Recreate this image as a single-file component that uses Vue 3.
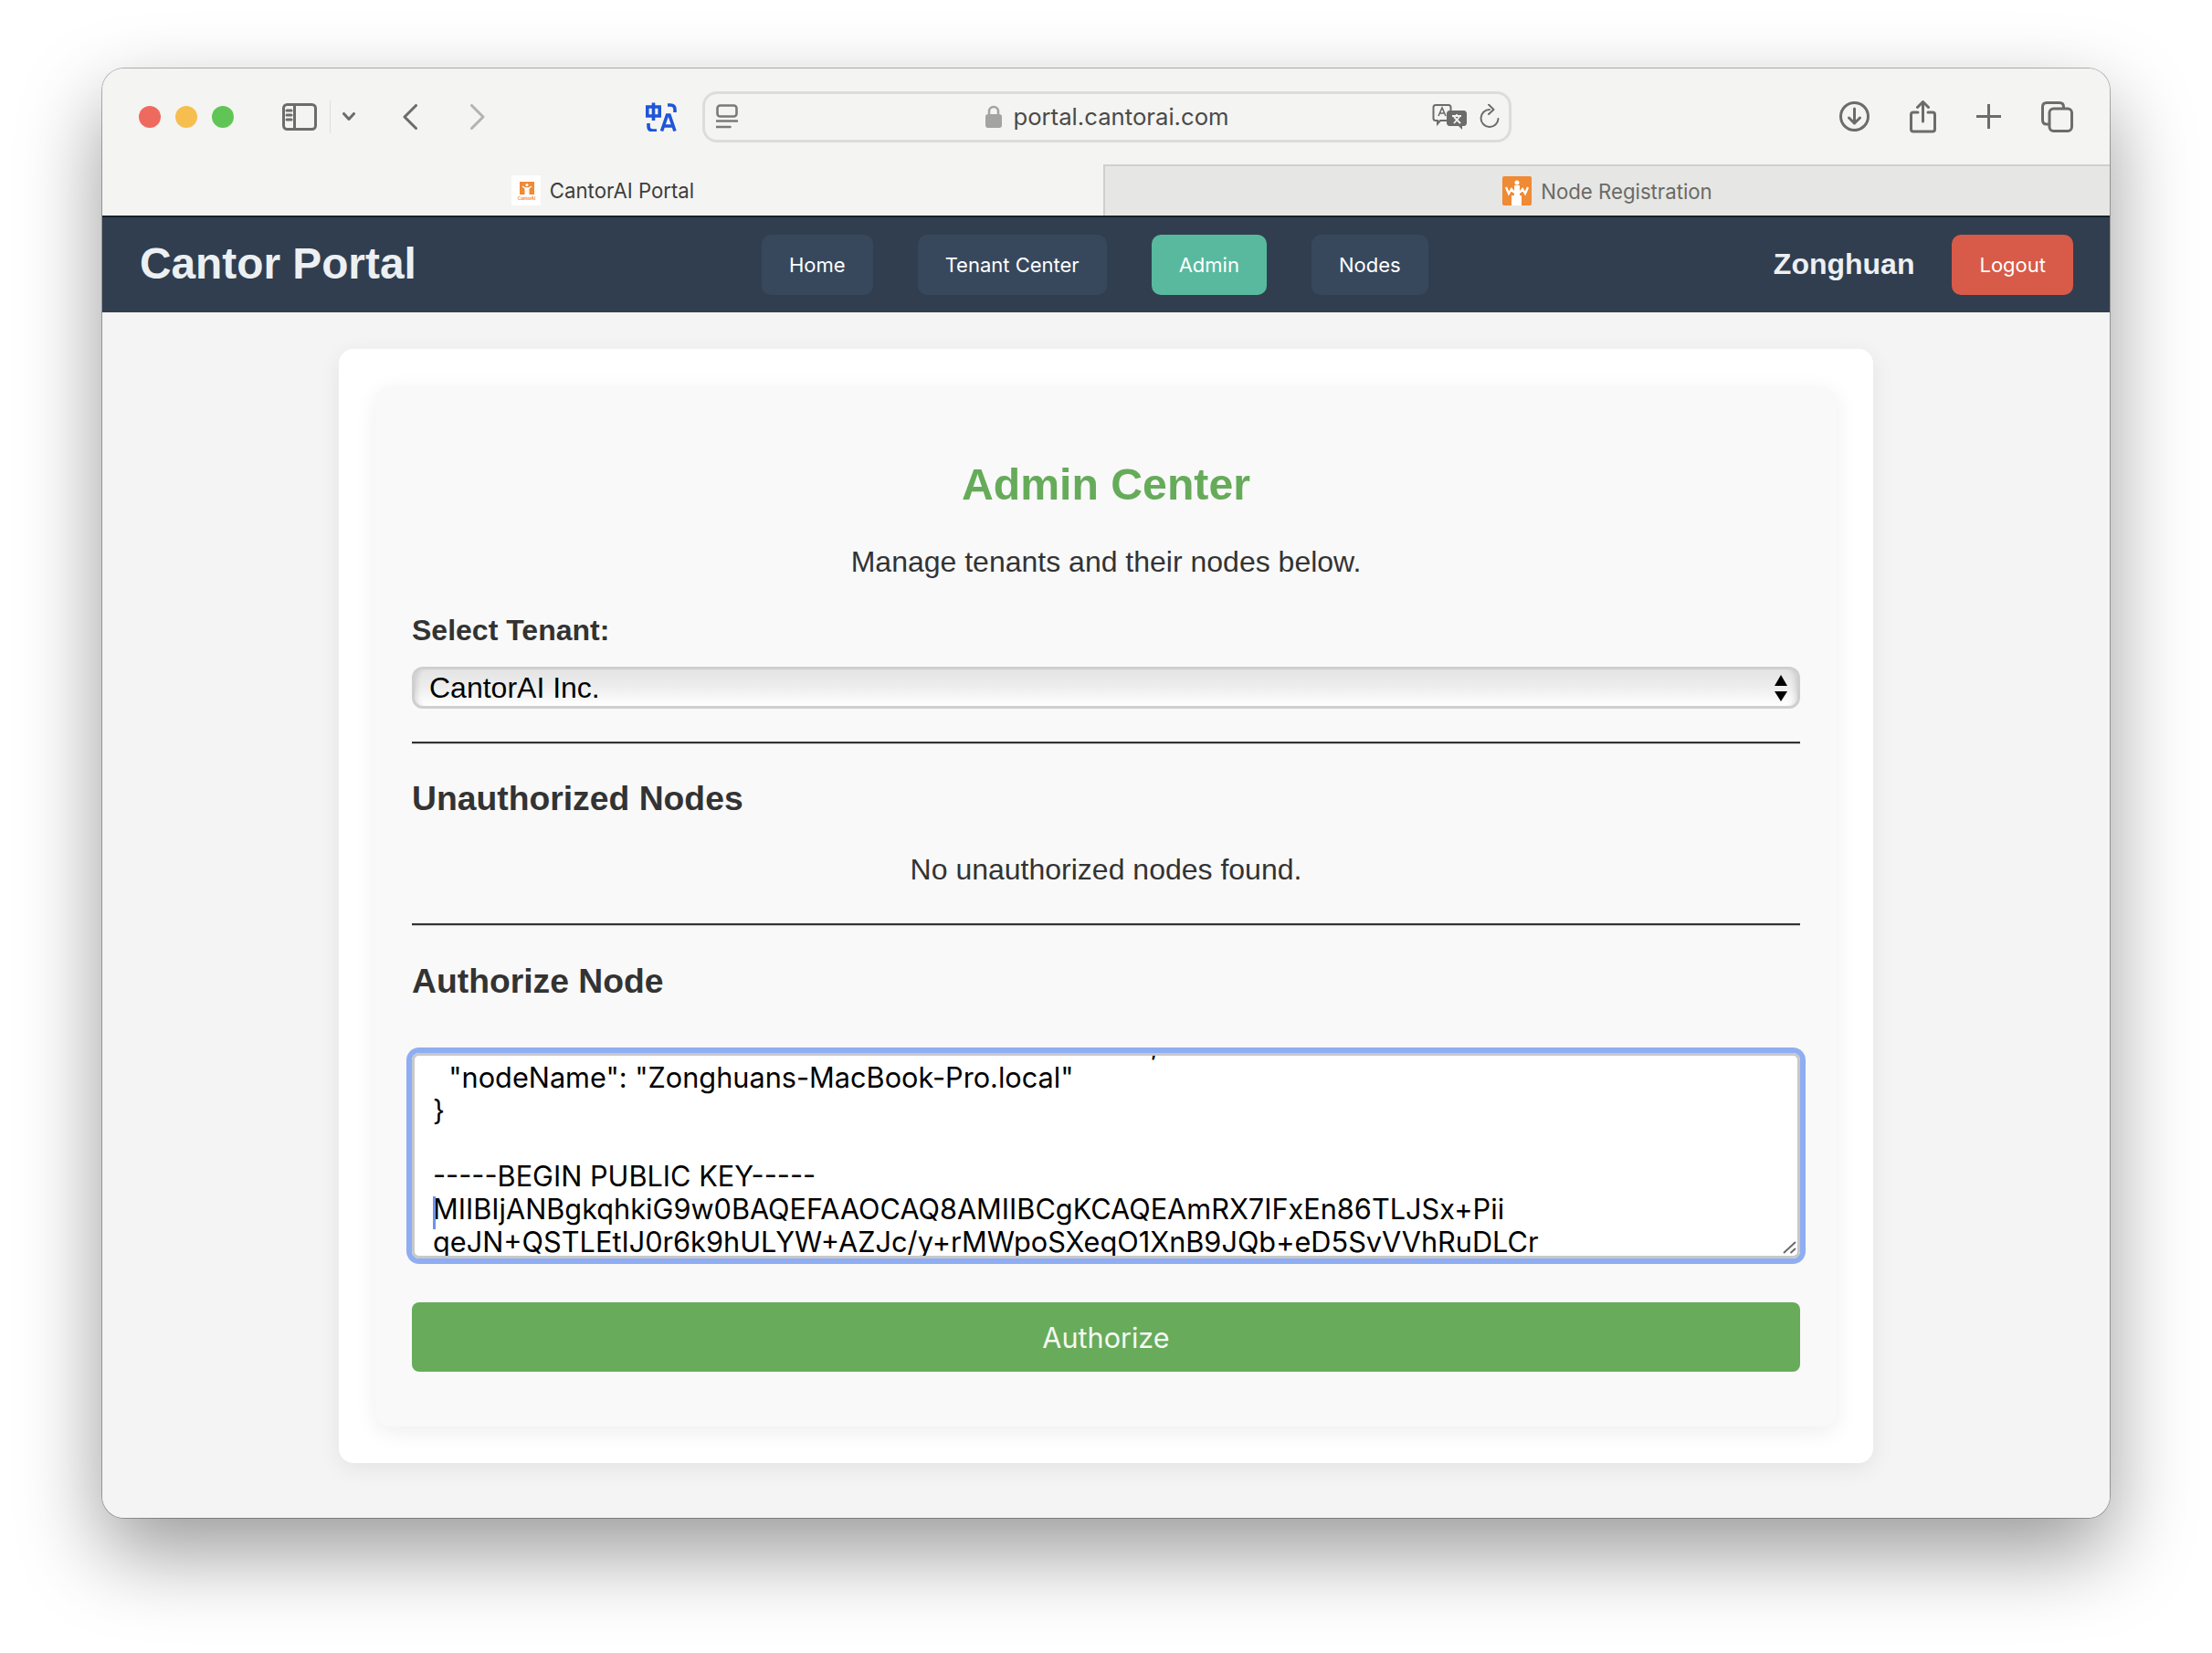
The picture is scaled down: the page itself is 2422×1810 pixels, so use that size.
<template>
  <div class="desk">
    <div class="window">
      <div class="toolbar">
        <div class="lights">
          <span class="light red"></span>
          <span class="light yellow"></span>
          <span class="light green"></span>
        </div>
        <svg class="ico sidebar-ico" width="38" height="30" viewBox="0 0 38 30">
          <rect x="1.5" y="1.5" width="35" height="27" rx="4" />
          <path d="M13.5 1.5v27M5 8h5M5 13h5M5 18h5" />
        </svg>
        <span class="divider"></span>
        <svg class="ico chevron" width="14" height="9" viewBox="0 0 14 9"><path d="M1.5 1.5l5.5 6 5.500-6" /></svg>
        <svg class="ico back" width="16" height="28" viewBox="0 0 16 28"><path d="M14.500 1.500L2 14l12.500 12.500" /></svg>
        <svg class="ico forward" width="16" height="28" viewBox="0 0 16 28"><path d="M1.500 1.500L14 14 1.500 26.500" /></svg>
        <svg class="translate" width="34" height="32" viewBox="0 0 34 32">
          <path d="M1.800 5h13.400v10H1.800zM8.500 0.500v19.500M24 3h3q5 0 5 5v3M3 23v3q0 5 5 5h4M17.500 31.500L23.500 14h2.500l6 17.500M19.800 26h10.500" />
        </svg>
        <div class="urlbar">
          <svg class="ico reader" width="24" height="27" viewBox="0 0 24 27">
            <rect x="1.500" y="1.500" width="21" height="12" rx="3" />
            <path d="M0.500 18.500h23M0.500 25h15" />
          </svg>
          <div class="address">
            <svg width="18" height="25" viewBox="0 0 18 25">
              <path class="shackle" d="M4 11V7a5 5 0 0 1 10 0v4" />
              <rect x="0" y="10" width="18" height="15" rx="3" fill="#a3a3a1" />
            </svg>
            <span class="url">portal.cantorai.com</span>
          </div>
          <svg class="page-translate" width="38" height="28" viewBox="0 0 38 28">
            <path class="bubble-a" d="M4 1h14c1.500 0 2.500 1 2.500 2.500v12c0 1.500-1 2.500-2.500 2.500H9l-3 3.500V18H4c-1.500 0-2.500-1-2.500-2.500v-12C1.500 2 2.500 1 4 1z" />
            <path class="glyph-a" d="M7 13l4-9 4 9M8.500 10h5" />
            <path class="bubble-x" d="M19 7h16c1.500 0 3 1.500 3 3v11c0 1.500-1.500 3-3 3h-2v4l-4-4H19c-1.500 0-3-1.500-3-3V10c0-1.500 1.500-3 3-3z" />
            <path class="glyph-x" d="M22 13h10M27 11v2M24 21l6-7M24 14l7 7" />
          </svg>
          <svg class="ico reload" width="22" height="27" viewBox="0 0 22 27">
            <path d="M11 6a9.500 9.500 0 1 0 9.500 10M10 0.500l5.500 5.500-5.500 5" />
          </svg>
        </div>
        <div class="actions">
          <svg class="ico" width="33" height="33" viewBox="0 0 33 33">
            <circle cx="16.500" cy="16.500" r="15" />
            <path d="M16.500 8v16M10.500 18l6 6 6-6" />
          </svg>
          <svg class="ico" width="29" height="36" viewBox="0 0 29 36">
            <path d="M9 13H4c-1.500 0-2.500 1-2.500 2.500v16c0 1.500 1 2.500 2.500 2.500h21c1.500 0 2.500-1 2.500-2.500v-16c0-1.500-1-2.500-2.500-2.500h-5M14.500 23V2M8.500 7.500l6-6 6 6" />
          </svg>
          <svg class="ico" width="27" height="27" viewBox="0 0 27 27"><path d="M13.500 0v27M0 13.500h27" /></svg>
          <svg class="ico" width="35" height="34" viewBox="0 0 35 34">
            <path d="M7 25H6c-3 0-4.500-1.500-4.500-4.500V6c0-3 1.500-4.500 4.500-4.500h14c3 0 4.500 1.500 4.500 4.500v1" />
            <rect x="9" y="8" width="24.500" height="24.500" rx="4.500" />
          </svg>
        </div>
      </div>

      <div class="tabs">
        <div class="tab active">
          <svg width="32" height="33" viewBox="0 0 32 33">
            <rect width="32" height="33" fill="#fff" />
            <rect x="9" y="7" width="16" height="14" fill="#ef8a35" />
            <rect x="14.500" y="14" width="5" height="7" fill="#fff" />
            <circle cx="17" cy="10.500" r="1.500" fill="#fff" />
            <path d="M12 12l3 2h4l3-2" stroke="#fff" stroke-width="1.500" fill="none" />
            <text x="16.500" y="27" class="fav-text">CantorAI</text>
          </svg>
          <span>CantorAI Portal</span>
        </div>
        <div class="tab inactive">
          <svg width="32" height="32" viewBox="0 0 32 32">
            <rect width="32" height="32" rx="2" fill="#ef8a35" />
            <rect x="10" y="21" width="11" height="11" fill="#fff" />
            <rect x="13" y="10" width="6" height="11" fill="#fff" />
            <circle cx="16" cy="7" r="2.500" fill="#fff" />
            <path d="M4 12l3 7 3-5 3 4M19 18l3-4 3 5 3-7" stroke="#fff" stroke-width="2.300" fill="none" />
          </svg>
          <span>Node Registration</span>
        </div>
      </div>

      <nav class="navbar">
        <div class="brand">Cantor Portal</div>
        <div class="nav-links">
          <button v-for="link in links" :key="link" class="nav-btn" :class="{ current: link === 'Admin' }">{{ link }}</button>
        </div>
        <div class="user">
          <span class="username">Zonghuan</span>
          <button class="logout">Logout</button>
        </div>
      </nav>

      <main class="content">
        <div class="outer-card">
          <div class="panel">
            <h1>Admin Center</h1>
            <p class="center-text intro">Manage tenants and their nodes below.</p>
            <label class="field-label">Select Tenant:</label>
            <div class="select">
              <span>CantorAI Inc.</span>
              <svg width="14" height="29" viewBox="0 0 14 29">
                <path d="M7 0l7 12H0zM0 18h14L7 29z" />
              </svg>
            </div>
            <hr class="rule-first" />
            <h2>Unauthorized Nodes</h2>
            <p class="center-text empty">No unauthorized nodes found.</p>
            <hr class="rule-second" />
            <h2>Authorize Node</h2>
            <div class="key-wrap">
              <textarea ref="keyBox" class="key-box" spellcheck="false" readonly :value="keyText"></textarea>
              <span class="caret"></span>
              <svg class="grip" width="15" height="14" viewBox="0 0 15 14">
                <path d="M1 13L14 1M8.500 13L14 8" />
              </svg>
            </div>
            <button class="authorize">Authorize</button>
          </div>
        </div>
      </main>
    </div>
  </div>
</template>

<script setup>
import { onMounted, ref } from 'vue'

const links = ['Home', 'Tenant Center', 'Admin', 'Nodes']

const keyBox = ref(null)

// the first visible row only shows the tail of a comma from the line above
const keyText = [
  ' '.repeat(91) + ',',
  '  "nodeName": "Zonghuans-MacBook-Pro.local"',
  '}',
  '',
  '-----BEGIN PUBLIC KEY-----',
  'MIIBIjANBgkqhkiG9w0BAQEFAAOCAQ8AMIIBCgKCAQEAmRX7IFxEn86TLJSx+Pii',
  'qeJN+QSTLEtIJ0r6k9hULYW+AZJc/y+rMWpoSXeqO1XnB9JQb+eD5SvVVhRuDLCr',
  '',
  ''
].join('\n')

onMounted(() => {
  keyBox.value.scrollTop = 30
})
</script>

<style>
html,
body {
  margin: 0;
  background: #fff;
}
</style>

<style scoped>
.desk {
  width: 2422px;
  height: 1810px;
  box-sizing: border-box;
  padding: 75px 112px 0;
  overflow: hidden;
  font-family: "Liberation Sans", Arial, sans-serif;
}

.window {
  width: 2198px;
  height: 1587px;
  border-radius: 24px;
  overflow: hidden;
  display: flex;
  flex-direction: column;
  box-shadow: 0 0 0 1px rgba(0, 0, 0, 0.28), 0 38px 90px rgba(0, 0, 0, 0.4);
  background: #f4f4f4;
}

.toolbar {
  height: 105px;
  flex: none;
  box-sizing: border-box;
  background: #f4f4f2;
  display: flex;
  align-items: center;
  padding: 0 39px 0 40px;
}

.lights {
  display: flex;
  gap: 16px;
  margin-right: 53px;
}

.light {
  width: 24px;
  height: 24px;
  border-radius: 50%;
}

.red { background: #ef6a5e; }
.yellow { background: #f6be4f; }
.green { background: #60c554; }

.ico {
  flex: none;
  fill: none;
  stroke: #6c6c6a;
  stroke-width: 3;
  stroke-linecap: round;
  stroke-linejoin: round;
}

.sidebar-ico { margin-right: 14px; }

.divider {
  width: 1px;
  height: 36px;
  background: #dfdfdd;
  margin-right: 13px;
}

.chevron { margin-right: 52px; }
.back { margin-right: 58px; }
.forward { stroke: #b3b3b1; margin-right: 176px; }

.translate {
  flex: none;
  fill: none;
  stroke: #1f55d8;
  stroke-width: 3.600;
  margin-right: 28px;
}

.urlbar {
  width: 886px;
  height: 56px;
  flex: none;
  box-sizing: border-box;
  border: 3px solid #dcdcda;
  border-radius: 16px;
  display: flex;
  align-items: center;
  padding: 0 10px 0 12px;
}

.reader { stroke: #7a7a78; stroke-width: 2.600; }

.address {
  flex: 1;
  display: flex;
  align-items: center;
  justify-content: center;
  gap: 12px;
  margin-left: 49px;
}

.shackle {
  fill: none;
  stroke: #a3a3a1;
  stroke-width: 2.500;
}

.url {
  font-family: Inter, sans-serif;
  font-size: 25.700px;
  color: #4a4a48;
}

.page-translate {
  flex: none;
  margin-right: 14px;
}

.bubble-a { fill: #f4f4f2; stroke: #6c6c6a; stroke-width: 2; }
.glyph-a { fill: none; stroke: #6c6c6a; stroke-width: 1.600; }
.bubble-x { fill: #6c6c6a; }
.glyph-x { fill: none; stroke: #f4f4f2; stroke-width: 1.800; }

.reload { stroke: #6c6c6a; stroke-width: 2; }

.actions {
  margin-left: auto;
  margin-right: 1px;
  display: flex;
  align-items: center;
  gap: 44px;
}

.tabs {
  height: 56px;
  flex: none;
  display: flex;
  font-family: Inter, sans-serif;
  font-size: 22.200px;
}

.tab {
  display: flex;
  align-items: center;
  justify-content: center;
  gap: 10px;
  box-sizing: border-box;
}

.active {
  width: 1096px;
  padding-top: 1px;
  background: #f4f4f2;
  color: #3e3e3c;
}

.inactive {
  flex: 1;
  background: #e6e6e4;
  color: #6a6a66;
  border-top: 2px solid #cfcfcd;
  border-left: 2px solid #cfcfcd;
}

.fav-text {
  font-size: 4.500px;
  font-weight: 700;
  fill: #ef8a35;
  text-anchor: middle;
}

.navbar {
  height: 106px;
  flex: none;
  box-sizing: border-box;
  border-top: 2px solid #17212c;
  background: #313e4f;
  display: flex;
  align-items: center;
  justify-content: space-between;
  padding: 0 40px 0 41px;
}

.brand {
  font-size: 47.800px;
  font-weight: 700;
  color: #ecf0f3;
  margin-top: -3px;
}

.nav-links {
  display: flex;
  gap: 49px;
}

button {
  border: none;
  cursor: pointer;
  font-family: Inter, sans-serif;
}

.nav-btn {
  height: 66px;
  padding: 0 30px;
  border-radius: 10px;
  background: #37485d;
  color: #fff;
  font-size: 22px;
}

.nav-btn.current {
  background: #58b99e;
}

.user {
  display: flex;
  align-items: center;
  gap: 41px;
}

.username {
  font-size: 32px;
  font-weight: 700;
  color: #ecf0f3;
  margin-top: -2px;
}

.logout {
  height: 66px;
  padding: 0 30px;
  border-radius: 10px;
  background: #d85a49;
  color: #fff;
  font-size: 22px;
}

.content {
  flex: 1;
  background: #f4f4f4;
  padding: 40px 259px;
}

.outer-card {
  background: #fff;
  border-radius: 16px;
  padding: 41px 40px 40px;
  box-shadow: 0 6px 24px rgba(0, 0, 0, 0.07);
}

.panel {
  background: #f9f9f9;
  border-radius: 16px;
  padding: 74px 40px 60px;
  box-shadow: 0 6px 24px rgba(0, 0, 0, 0.07);
  color: #333;
}

h1 {
  margin: 0;
  text-align: center;
  font-size: 48.200px;
  line-height: 66px;
  font-weight: 700;
  color: #66ab5a;
}

.center-text {
  margin: 0;
  text-align: center;
  font-size: 32px;
  line-height: 40px;
}

.intro { margin-top: 32px; }

.field-label {
  display: block;
  margin-top: 35px;
  font-size: 32px;
  line-height: 40px;
  font-weight: 700;
}

.select {
  margin-top: 20px;
  height: 46px;
  box-sizing: border-box;
  border: 3px solid #cfcfcf;
  border-radius: 12px;
  background: linear-gradient(to bottom, #e4e4e4 0%, #eeeeee 50%, #ffffff 100%);
  box-shadow: inset 7px 0 6px -5px rgba(0, 0, 0, 0.14), inset -7px 0 6px -5px rgba(0, 0, 0, 0.14);
  display: flex;
  align-items: center;
  justify-content: space-between;
  padding: 0 11px 0 16px;
  font-size: 32px;
  color: #000;
}

hr {
  margin: 0;
  height: 3px;
  border: none;
  background: linear-gradient(to bottom, #333 0 2px, #ccc 2px);
}

.rule-first { margin-top: 36px; }

h2 {
  margin: 0;
  font-size: 37.300px;
  line-height: 46px;
  font-weight: 700;
}

.rule-first + h2 { margin-top: 36px; }
.empty { margin-top: 35px; }
.rule-second { margin-top: 39px; }
.rule-second + h2 { margin-top: 37px; }

.key-wrap {
  position: relative;
  margin-top: 56px;
  height: 225px;
}

.key-box {
  display: block;
  width: 100%;
  height: 100%;
  box-sizing: border-box;
  padding: 0 20px;
  border: 3px solid #c8c8c8;
  border-radius: 8px;
  outline: none;
  box-shadow: 0 0 0 6px #8fadf2;
  background: #fff;
  color: #000;
  font-family: Inter, "Liberation Sans", sans-serif;
  font-size: 30.700px;
  line-height: 36px;
  white-space: pre;
  resize: none;
  scrollbar-width: none;
}

.caret {
  position: absolute;
  left: 23px;
  top: 157px;
  width: 3px;
  height: 36px;
  background: #6e93ea;
}

.grip {
  position: absolute;
  right: 4px;
  bottom: 5px;
  fill: none;
  stroke: #6a6a6a;
  stroke-width: 2;
}

.authorize {
  display: block;
  width: 100%;
  height: 76px;
  margin-top: 48px;
  border-radius: 8px;
  background: #67ab5b;
  color: #f4f9f2;
  font-size: 30.600px;
}
</style>
